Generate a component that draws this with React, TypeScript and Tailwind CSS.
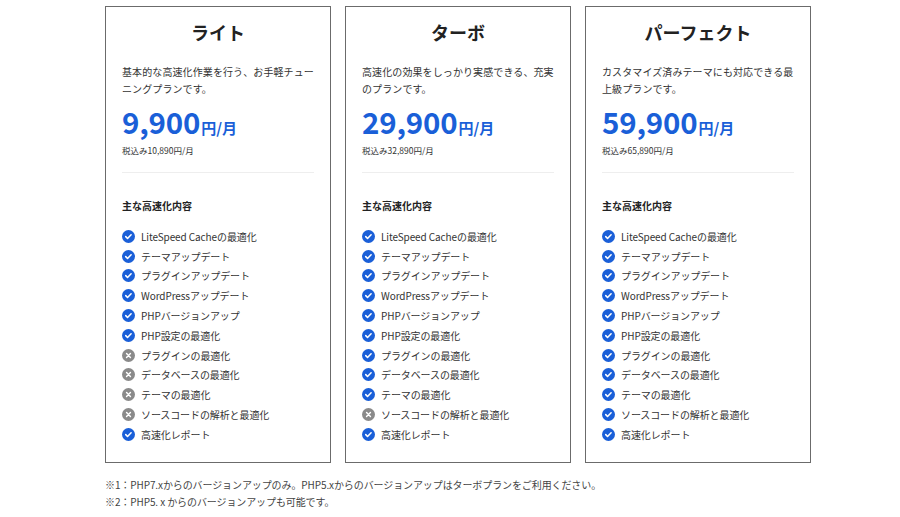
import React from "react";

type Plan = {
  name: string;
  desc: string;
  price: string;
  tax: string;
  enabled: boolean[];
};

const features = [
  "LiteSpeed Cacheの最適化",
  "テーマアップデート",
  "プラグインアップデート",
  "WordPressアップデート",
  "PHPバージョンアップ",
  "PHP設定の最適化",
  "プラグインの最適化",
  "データベースの最適化",
  "テーマの最適化",
  "ソースコードの解析と最適化",
  "高速化レポート",
];

const plans: Plan[] = [
  {
    name: "ライト",
    desc: "基本的な高速化作業を行う、お手軽チューニングプランです。",
    price: "9,900",
    tax: "税込み10,890円/月",
    enabled: [true, true, true, true, true, true, false, false, false, false, true],
  },
  {
    name: "ターボ",
    desc: "高速化の効果をしっかり実感できる、充実のプランです。",
    price: "29,900",
    tax: "税込み32,890円/月",
    enabled: [true, true, true, true, true, true, true, true, true, false, true],
  },
  {
    name: "パーフェクト",
    desc: "カスタマイズ済みテーマにも対応できる最上級プランです。",
    price: "59,900",
    tax: "税込み65,890円/月",
    enabled: [true, true, true, true, true, true, true, true, true, true, true],
  },
];

function CheckIcon() {
  return (
    <svg width="13" height="13" viewBox="0 0 16 16" className="shrink-0">
      <circle cx="8" cy="8" r="8" fill="#1a5fd8" />
      <path d="M4.6 8.2l2.2 2.2 4.4-4.6" fill="none" stroke="#fff" strokeWidth="1.9" strokeLinecap="round" strokeLinejoin="round" />
    </svg>
  );
}

function CrossIcon() {
  return (
    <svg width="13" height="13" viewBox="0 0 16 16" className="shrink-0">
      <circle cx="8" cy="8" r="8" fill="#8a8a8a" />
      <path d="M5.6 5.6l4.8 4.8M10.4 5.6l-4.8 4.8" fill="none" stroke="#fff" strokeWidth="1.8" strokeLinecap="round" />
    </svg>
  );
}

function PlanCard({ plan }: { plan: Plan }) {
  return (
    <div className="w-[226px] h-[457px] border border-[#6b6b6b] bg-white px-4 pt-[7px]">
      <h2 className="text-center text-[18px] font-bold leading-[36px] text-[#222]">{plan.name}</h2>
      <p className="mt-[13px] text-[10px] leading-[17px] text-[#333] tracking-[0.1px]">{plan.desc}</p>
      <div className="mt-[6px] flex items-baseline text-[#1a5fd8] font-bold">
        <span className="text-[29.5px] leading-[36px] tracking-[-0.2px]">{plan.price}</span>
        <span className="text-[15px] ml-[1px]">円/月</span>
      </div>
      <p className="text-[8.5px] leading-[12px] text-[#333] mt-[4px]">{plan.tax}</p>
      <div className="mt-[16px] border-t border-[#eeeeee]" />
      <h3 className="mt-[25px] text-[10px] font-bold leading-[16px] text-[#222]">主な高速化内容</h3>
      <ul className="mt-[13px] flex flex-col">
        {features.map((f, i) => (
          <li key={f} className="flex items-center gap-[6px] h-[19.8px] text-[10px] tracking-[-0.1px] text-[#333]">
            {plan.enabled[i] ? <CheckIcon /> : <CrossIcon />}
            <span>{f}</span>
          </li>
        ))}
      </ul>
    </div>
  );
}

export default function App() {
  return (
    <div
      className="w-[900px] h-[517px] bg-white overflow-hidden"
      style={{ fontFamily: '"Noto Sans CJK JP", "Noto Sans", sans-serif' }}
    >
      <div className="pl-[105px] pt-[6px]">
        <div className="flex gap-[14px]">
          {plans.map((p) => (
            <PlanCard key={p.name} plan={p} />
          ))}
        </div>
        <div className="mt-[13px] text-[10px] leading-[17px] tracking-[-0.1px] text-[#444]">
          <p>※1：PHP7.xからのバージョンアップのみ。PHP5.xからのバージョンアップはターボプランをご利用ください。</p>
          <p>※2：PHP5. x からのバージョンアップも可能です。</p>
        </div>
      </div>
    </div>
  );
}
